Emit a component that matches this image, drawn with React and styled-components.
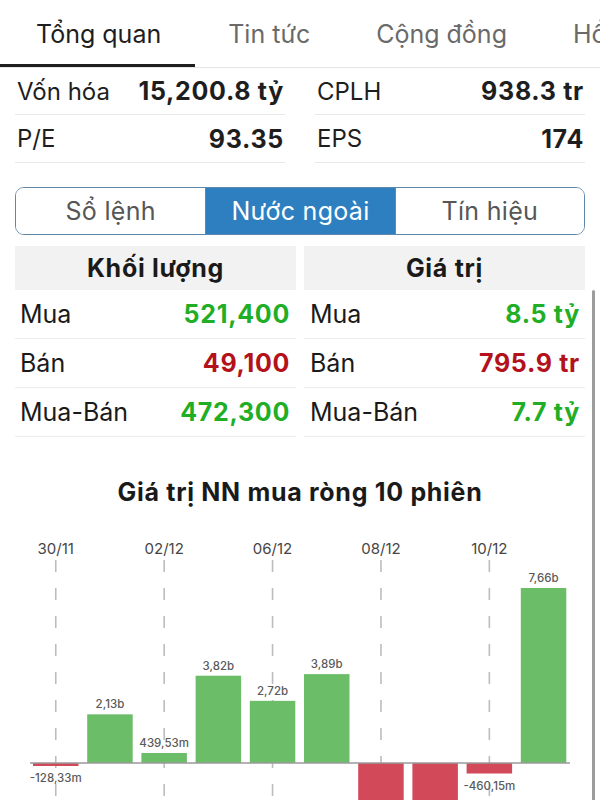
import React from "react";
import styled, { createGlobalStyle } from "styled-components";

const GlobalStyle = createGlobalStyle`
  html, body { margin: 0; padding: 0; background: #fff; }
  body { font-family: Inter, "Noto Sans", "Liberation Sans", sans-serif; color: #1c1c1c; overflow: hidden; }
  * { box-sizing: border-box; }
`;

const Page = styled.div`
  position: relative;
  width: 600px;
  height: 800px;
  overflow: hidden;
  background: #fff;
`;

const TabBar = styled.div`
  display: flex;
  height: 68px;
  border-bottom: 1px solid #e6e6e6;
  overflow: hidden;
  white-space: nowrap;
`;

const Tab = styled.div`
  flex: none;
  display: flex;
  align-items: center;
  height: 67px;
  padding-top: 3px;
  padding-left: ${(p) => (p.$first ? "36px" : "33px")};
  padding-right: ${(p) => (p.$first ? "34px" : "33px")};
  font-size: 25px;
  color: ${(p) => (p.$active ? "#1e1e1e" : "#6a6a6a")};
  border-bottom: 3px solid ${(p) => (p.$active ? "#1e1e1e" : "transparent")};
`;

const InfoGrid = styled.div`
  display: grid;
  grid-template-columns: 1fr 1fr;
  column-gap: 30px;
  padding: 0 15px;
`;

const InfoCell = styled.div`
  display: flex;
  align-items: center;
  justify-content: space-between;
  height: ${(p) => (p.$tall ? "48px" : "47px")};
  border-bottom: 1px solid #e9e9e9;
  padding: 0 1px 0 2px;
`;

const InfoLabel = styled.span`
  font-size: 24px;
  color: #1e1e1e;
`;

const InfoValue = styled.span`
  font-size: 25px;
  font-weight: 700;
  letter-spacing: 0.7px;
  color: #1e1e1e;
`;

const Segmented = styled.div`
  display: grid;
  grid-template-columns: repeat(3, 1fr);
  height: 48px;
  margin: 24px 15px 0;
  border: 1.5px solid #5f88ab;
  border-radius: 9px;
  overflow: hidden;
`;

const Segment = styled.div`
  display: flex;
  align-items: center;
  justify-content: center;
  font-size: 25px;
  letter-spacing: 0.3px;
  color: ${(p) => (p.$active ? "#ffffff" : "#565656")};
  background: ${(p) => (p.$active ? "#2e7fc0" : "#ffffff")};
  & + & { border-left: 1.5px solid #5f88ab; }
`;

const Tables = styled.div`
  display: grid;
  grid-template-columns: 1fr 1fr;
  column-gap: 8px;
  margin: 11px 15px 0;
`;

const TableCol = styled.div`
  display: flex;
  flex-direction: column;
`;

const TableHead = styled.div`
  height: 44px;
  display: flex;
  align-items: center;
  justify-content: center;
  background: #f2f2f2;
  font-size: 25px;
  font-weight: 700;
  letter-spacing: 0.7px;
  color: #1a1a1a;
`;

const TableRow = styled.div`
  height: 49px;
  display: flex;
  align-items: center;
  justify-content: space-between;
  padding: ${(p) => (p.$right ? "0 5px 0 6px" : "0 6px 0 5px")};
  border-bottom: 1px solid #ececec;
`;

const RowLabel = styled.span`
  font-size: 25px;
  color: #1a1a1a;
`;

const RowValue = styled.span`
  font-size: 25px;
  font-weight: 700;
  letter-spacing: 0.7px;
  color: ${(p) => (p.$tone === "up" ? "#1fae26" : "#b3121b")};
`;

const ChartTitle = styled.div`
  margin-top: 40px;
  height: 30px;
  line-height: 30px;
  text-align: center;
  font-size: 25px;
  font-weight: 700;
  letter-spacing: 0.7px;
  color: #1a1a1a;
`;

const ChartSvg = styled.svg`
  display: block;
  margin-top: 13px;
`;

const ScrollIndicator = styled.div`
  position: absolute;
  top: 290px;
  right: 5px;
  width: 3px;
  height: 520px;
  border-radius: 2px;
  background: #9c9c9c;
`;

const info = [
  ["Vốn hóa", "15,200.8 tỷ"],
  ["CPLH", "938.3 tr"],
  ["P/E", "93.35"],
  ["EPS", "174"],
];

const volume = [
  ["Mua", "521,400", "up"],
  ["Bán", "49,100", "down"],
  ["Mua-Bán", "472,300", "up"],
];

const value = [
  ["Mua", "8.5 tỷ", "up"],
  ["Bán", "795.9 tr", "down"],
  ["Mua-Bán", "7.7 tỷ", "up"],
];

const bars = [
  { v: -0.12833, label: "-128,33m" },
  { v: 2.13, label: "2,13b" },
  { v: 0.43953, label: "439,53m" },
  { v: 3.82, label: "3,82b" },
  { v: 2.72, label: "2,72b" },
  { v: 3.89, label: "3,89b" },
  { v: -2.6, label: null },
  { v: -2.9, label: null },
  { v: -0.46015, label: "-460,15m" },
  { v: 7.66, label: "7,66b" },
];

const dates = ["30/11", "02/12", "06/12", "08/12", "10/12"];

function Chart() {
  const base = 243;
  const scale = 22.85;
  const pitch = 54.2;
  const x0 = 33;
  const w = 45.5;
  const center = (i) => x0 + i * pitch + w / 2;
  return (
    <ChartSvg width="600" height="280" viewBox="0 0 600 280">
      {dates.map((d, k) => {
        const cx = center(k * 2);
        return (
          <g key={d}>
            <text x={cx} y="34" textAnchor="middle" fontSize="15" fill="#454545" fontFamily="Inter, sans-serif">
              {d}
            </text>
            <line x1={cx} y1="40" x2={cx} y2="280" stroke="#bdbdbd" strokeWidth="1.6" strokeDasharray="12 16" />
          </g>
        );
      })}
      {bars.map((b, i) => {
        const h = Math.max(Math.abs(b.v) * scale, 3);
        const x = x0 + i * pitch;
        const up = b.v >= 0;
        const y = up ? base - h : base;
        return (
          <g key={i}>
            <rect x={x} y={y} width={w} height={h} fill={up ? "#6bbd68" : "#d24a5a"} />
            {b.label && (
              <text
                x={center(i)}
                y={up ? y - 6 : base + h + 16}
                textAnchor="middle"
                fontSize="11.5"
                fontWeight="500"
                fill="#5a5a5a"
                fontFamily="Inter, sans-serif"
              >
                {b.label}
              </text>
            )}
          </g>
        );
      })}
      <line x1="30" y1={base} x2="570" y2={base} stroke="#9a9a9a" strokeWidth="1.5" />
    </ChartSvg>
  );
}

export default function App() {
  return (
    <Page>
      <GlobalStyle />
      <TabBar>
        <Tab $active $first>Tổng quan</Tab>
        <Tab>Tin tức</Tab>
        <Tab>Cộng đồng</Tab>
        <Tab>Hồ sơ</Tab>
      </TabBar>
      <InfoGrid>
        {info.map(([l, v], i) => (
          <InfoCell key={l} $tall={i >= 2}>
            <InfoLabel>{l}</InfoLabel>
            <InfoValue>{v}</InfoValue>
          </InfoCell>
        ))}
      </InfoGrid>
      <Segmented>
        <Segment>Sổ lệnh</Segment>
        <Segment $active>Nước ngoài</Segment>
        <Segment>Tín hiệu</Segment>
      </Segmented>
      <Tables>
        <TableCol>
          <TableHead>Khối lượng</TableHead>
          {volume.map(([l, v, t]) => (
            <TableRow key={l}>
              <RowLabel>{l}</RowLabel>
              <RowValue $tone={t}>{v}</RowValue>
            </TableRow>
          ))}
        </TableCol>
        <TableCol>
          <TableHead>Giá trị</TableHead>
          {value.map(([l, v, t]) => (
            <TableRow key={l} $right>
              <RowLabel>{l}</RowLabel>
              <RowValue $tone={t}>{v}</RowValue>
            </TableRow>
          ))}
        </TableCol>
      </Tables>
      <ChartTitle>Giá trị NN mua ròng 10 phiên</ChartTitle>
      <Chart />
      <ScrollIndicator />
    </Page>
  );
}
